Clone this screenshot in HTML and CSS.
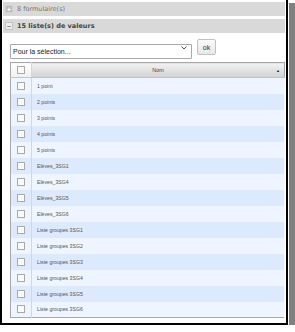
FILE: index.html
```html
<!DOCTYPE html>
<html>
<head>
    <title>Listes de valeurs</title>
    <link rel="stylesheet" href="styles.css">
</head>
<body>
<div class="frame">
    <div class="bar bar-closed">
        <span class="toggle"><svg width="7" height="7" viewBox="0 0 7 7"><path d="M3.5 1.5v4M1.5 3.5h4" stroke="#fff" stroke-width="1.2"/></svg></span>
        8 formulaire(s)
    </div>
    <div class="bar bar-open">
        <span class="toggle"><svg width="7" height="7" viewBox="0 0 7 7"><path d="M1.5 3.5h4" stroke="#888" stroke-width="1.2"/></svg></span>
        15 liste(s) de valeurs
    </div>

    <div class="actions">
        <div class="select-wrap">
            <select name="action">
                <option>Pour la sélection...</option>
            </select>
            <svg class="chevron" width="6" height="4" viewBox="0 0 6 4"><path d="M0.5 0.5l2.5 2.5 2.5-2.5" fill="none" stroke="#555" stroke-width="1"/></svg>
        </div>
        <button type="button">ok</button>
    </div>

    <table class="grid">
        <thead>
            <tr>
                <th class="col-check"><span class="box"></span></th>
                <th class="col-name">Nom <span class="sort">&#9650;</span></th>
            </tr>
        </thead>
        <tbody>
            <tr><td class="col-check"><span class="box"></span></td><td>1 point</td></tr>
            <tr><td class="col-check"><span class="box"></span></td><td>2 points</td></tr>
            <tr><td class="col-check"><span class="box"></span></td><td>3 points</td></tr>
            <tr><td class="col-check"><span class="box"></span></td><td>4 points</td></tr>
            <tr><td class="col-check"><span class="box"></span></td><td>5 points</td></tr>
            <tr><td class="col-check"><span class="box"></span></td><td>Elèves_3SG1</td></tr>
            <tr><td class="col-check"><span class="box"></span></td><td>Elèves_3SG4</td></tr>
            <tr><td class="col-check"><span class="box"></span></td><td>Elèves_3SG5</td></tr>
            <tr><td class="col-check"><span class="box"></span></td><td>Elèves_3SG6</td></tr>
            <tr><td class="col-check"><span class="box"></span></td><td>Liste groupes 3SG1</td></tr>
            <tr><td class="col-check"><span class="box"></span></td><td>Liste groupes 3SG2</td></tr>
            <tr><td class="col-check"><span class="box"></span></td><td>Liste groupes 3SG3</td></tr>
            <tr><td class="col-check"><span class="box"></span></td><td>Liste groupes 3SG4</td></tr>
            <tr><td class="col-check"><span class="box"></span></td><td>Liste groupes 3SG5</td></tr>
            <tr><td class="col-check"><span class="box"></span></td><td>Liste groupes 3SG6</td></tr>
        </tbody>
    </table>
</div>
</body>
</html>
```

FILE: styles.css
```css
* {
    box-sizing: border-box;
}

html, body {
    margin: 0;
    padding: 0;
    background: #fff;
    font-family: "Liberation Sans", Arial, sans-serif;
    color: #555;
    overflow: hidden;
}

.frame {
    width: 288px;
    height: 330px;
    margin-top: -5px;
    border: 2px solid #000;
    background: #fff;
    padding: 5px 1px 0 1px;
    box-shadow: 1px 1px 0 #fff, 8px 8px 0 #808080;
}

.bar {
    display: flex;
    align-items: center;
    height: 14px;
    margin-bottom: 3px;
    padding-left: 2px;
    background: #d9d9d9;
    font-family: "DejaVu Sans", Verdana, sans-serif;
    font-size: 6.5px;
}

.bar-closed {
    color: #777;
}

.bar-open {
    color: #444;
    font-weight: bold;
}

.toggle {
    display: flex;
    width: 8px;
    height: 8px;
    margin-right: 4px;
    align-items: center;
    justify-content: center;
}

.bar-closed .toggle {
    background: #bdbdbd;
    border: 1px solid #cfcfcf;
}

.bar-open .toggle {
    background: #ececec;
    border: 1px solid #c4c4c4;
}

.actions {
    display: flex;
    align-items: center;
    gap: 5px;
    margin: 6px 0 0 7px;
}

.select-wrap {
    position: relative;
    width: 182px;
    height: 15px;
}

.select-wrap select {
    appearance: none;
    -webkit-appearance: none;
    width: 100%;
    height: 100%;
    margin: 0;
    padding: 0 0 0 2px;
    border: 1px solid #a9a9a9;
    border-radius: 1px;
    background: #fff;
    font-family: "Liberation Sans", Arial, sans-serif;
    font-size: 7px;
    color: #222;
}

.chevron {
    position: absolute;
    right: 5px;
    top: 6px;
}

button {
    width: 19px;
    height: 16px;
    padding: 0;
    border: 1px solid #c2c2c2;
    border-radius: 2px;
    background: linear-gradient(#fafafa, #e8e8e8);
    font-family: "Liberation Sans", Arial, sans-serif;
    font-size: 7px;
    color: #333;
}

.grid {
    width: 275px;
    margin: 7px 0 0 7px;
    border-collapse: collapse;
    border: 1px solid #a8a8a8;
    font-size: 5.2px;
    table-layout: fixed;
}

.grid th,
.grid td {
    height: 16px;
    padding: 0;
    text-align: left;
    font-weight: normal;
}

.grid th {
    height: 15px;
    background: linear-gradient(#f2f2f2, #d2d2d2);
    border-bottom: 1px solid #c4c4c4;
    color: #444;
    font-size: 5.5px;
}

.grid th.col-check {
    background: linear-gradient(#ffffff, #f0f0f0);
}

.col-check {
    width: 21px;
    text-align: center;
    border-right: 1px solid #cfd8e4;
}

.grid th.col-name {
    position: relative;
    text-align: center;
}

.sort {
    position: absolute;
    right: 4px;
    top: 5px;
    font-size: 4px;
    color: #222;
}

.grid td {
    padding-left: 5px;
    color: #555;
    border-right: 1px solid #f7faff;
}

.grid td.col-check {
    padding-left: 0;
    border-right: 1px solid #cfd8e4;
}

.grid tbody tr:nth-child(odd) {
    background: #eef5ff;
}

.grid tbody tr:nth-child(even) {
    background: #dde9fc;
}

.box {
    display: block;
    width: 8px;
    height: 8px;
    margin: 0 auto;
    border: 1px solid #a9a9a9;
    background: #fafafa;
}
```
